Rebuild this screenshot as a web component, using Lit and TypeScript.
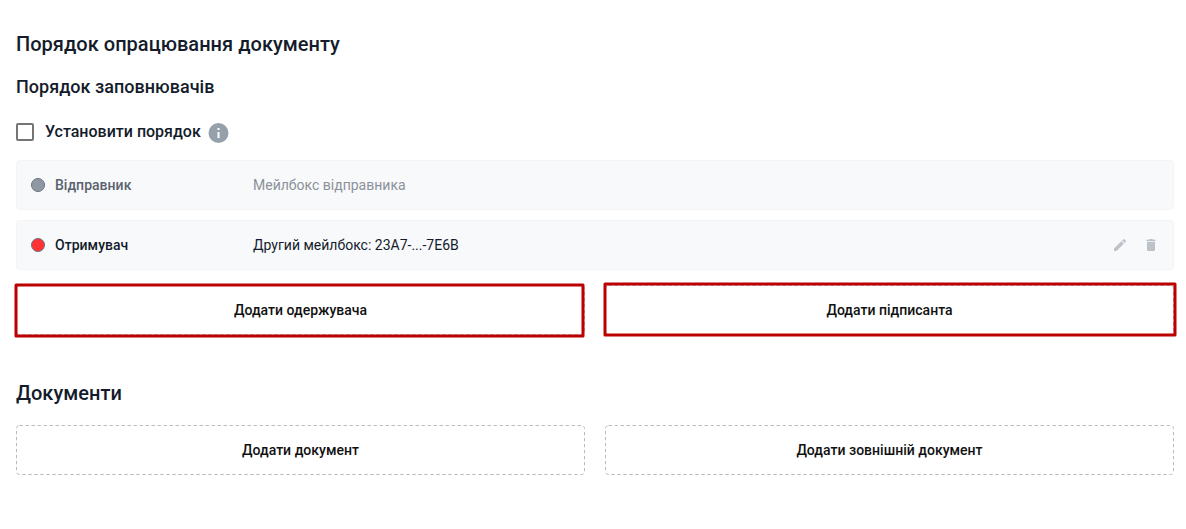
import { LitElement, html, css, svg } from "lit";
import { customElement } from "lit/decorators.js";

@customElement("app-root")
class AppRoot extends LitElement {
  static styles = css`
    :host { display: block; box-sizing: border-box; width: 1186px; height: 529px; padding: 28px 12px 0 16px; background: #fff; color: #141c2b; font-family: Roboto, sans-serif; font-size: 14px; overflow: hidden; }
    * { box-sizing: border-box; }
    h1, h2 { margin: 0; font-weight: 500; }
    h1 { font-size: 20px; line-height: 32px; letter-spacing: 0.02px; }
    h2 { font-size: 18px; line-height: 28px; margin-top: 13px; letter-spacing: 0.02px; }
    .order { display: flex; align-items: center; height: 24px; margin-top: 19px; font-size: 16px; font-weight: 500; }
    .order-label { padding-bottom: 2px; }
    .box { width: 18px; height: 18px; border: 2px solid #757575; border-radius: 2px; margin-right: 11px; }
    .info { margin-left: 7px; margin-top: 2px; display: block; }
    .row { display: flex; align-items: center; width: 1158px; height: 50px; padding: 0 14px; border: 1px solid #f2f4f6; border-radius: 4px; background: #f8f9fb; margin-top: 10px; }
    .order + .row { margin-top: 16px; }
    .dot { width: 14px; height: 14px; border: 1px solid #69727d; border-radius: 50%; background: #8f98a3; margin-right: 10px; }
    .dot.red { background: #ff3333; }
    .role { width: 198px; font-weight: 500; letter-spacing: 0.03px; }
    .sender .role { color: #5a626d; }
    .sender .value { color: #8b9199; }
    .value { flex: 1; }
    .icons { display: flex; gap: 15px; }
    .icons svg { display: block; }
    .pair { display: grid; grid-template-columns: 569px 569px; gap: 20px; margin-top: 15px; }
    .btn { position: relative; font: 500 14px Roboto, sans-serif; letter-spacing: 0.02px; color: #111; background: #fff; height: 50px; padding: 0; border: 0; border-radius: 3px; }
    .outline { position: absolute; left: 0; top: 0; overflow: visible; fill: none; }
    .dash { stroke: #b8bcc1; stroke-width: 1; stroke-dasharray: 3.4 2.6; }
    .mark { stroke: #bc0000; stroke-width: 3; stroke-linejoin: round; }
    .title { margin-top: 42px; }
    .docs { margin-top: 16px; }
  `;

  button(label: string, mark?: number[]) {
    return html`<button class="btn">${label}<svg class="outline" width="569" height="50">
      <rect class="dash" x="0.5" y="0.5" width="568" height="49" rx="3"/>
      ${mark ? svg`<rect class="mark" x=${mark[0]} y=${mark[1]} width=${mark[2]} height=${mark[3]}/>` : null}
    </svg></button>`;
  }

  render() {
    return html`
      <h1>Порядок опрацювання документу</h1>
      <h2>Порядок заповнювачів</h2>
      <div class="order"><span class="box"></span><span class="order-label">Установити порядок</span>
        <svg class="info" width="21" height="20" viewBox="0 0 21 20"><circle cx="10.5" cy="10" r="10" fill="#96a0aa"/><path d="M9.5 5h2v2h-2zM9.5 9h2v6h-2z" fill="#fff"/></svg>
      </div>
      <div class="row sender"><span class="dot"></span><span class="role">Відправник</span><span class="value">Мейлбокс відправника</span></div>
      <div class="row"><span class="dot red"></span><span class="role">Отримувач</span><span class="value">Другий мейлбокс: 23A7-...-7E6B</span>
        <span class="icons">
          <svg width="16" height="16" viewBox="0 0 24 24" fill="#bcc2c8"><path d="M3 17.25V21h3.75L17.81 9.94l-3.75-3.75zM20.71 7.04a1 1 0 0 0 0-1.41l-2.34-2.34a1 1 0 0 0-1.41 0l-1.83 1.83 3.75 3.75z"/></svg>
          <svg width="16" height="16" viewBox="0 0 24 24" fill="#bcc2c8"><path d="M6 19a2 2 0 0 0 2 2h8a2 2 0 0 0 2-2V7H6zM19 4h-3.5l-1-1h-5l-1 1H5v2h14z"/></svg>
        </span>
      </div>
      <div class="pair">
        ${this.button("Додати одержувача", [0, 0, 567, 51])}
        ${this.button("Додати підписанта", [0, -1, 570, 51])}
      </div>
      <h1 class="title">Документи</h1>
      <div class="pair docs">${this.button("Додати документ")}${this.button("Додати зовнішній документ")}</div>
    `;
  }
}
